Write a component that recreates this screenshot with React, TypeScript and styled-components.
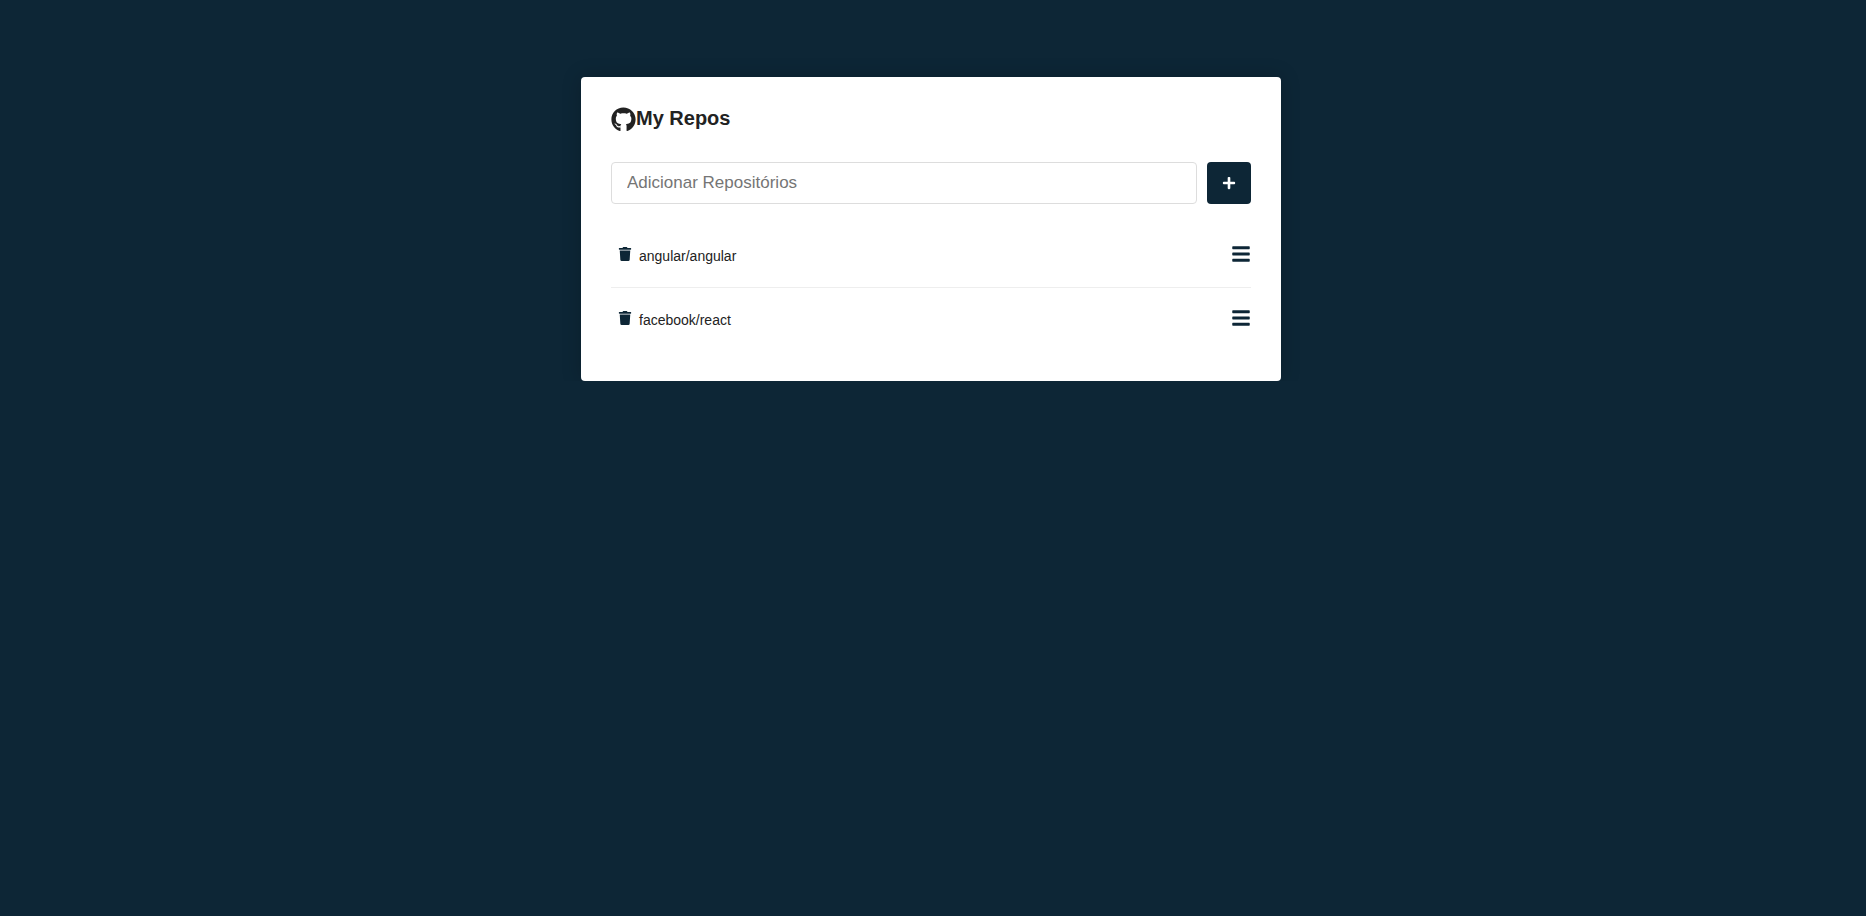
import React from 'react';
import styled, { createGlobalStyle } from 'styled-components';
import { FaGithub, FaPlus, FaBars, FaTrash } from 'react-icons/fa';

const GlobalStyle = createGlobalStyle`
  * { margin: 0; padding: 0; outline: 0; box-sizing: border-box; }
  body { background: #0d2636; font-size: 14px; padding-right: 4px; }
  body, input, button { color: #222; font-family: Arial, "Liberation Sans", Helvetica, sans-serif; }
  button { cursor: pointer; }
`;

const Container = styled.main`
  max-width: 700px;
  background: #fff;
  border-radius: 4px;
  box-shadow: 0 0 20px rgba(0, 0, 0, 0.2);
  padding: 30px;
  margin: 77px auto 0;
`;

const Title = styled.h1`
  font-size: 20px;
  display: flex;
  align-items: flex-start;
`;

const Form = styled.form`
  margin-top: 30px;
  display: flex;
`;

const RepoInput = styled.input`
  flex: 1;
  min-width: 0;
  height: 42px;
  border: 1px solid #ddd;
  padding: 10px 15px;
  border-radius: 4px;
  font-size: 17px;
`;

const SubmitButton = styled.button`
  background: #0d2636;
  border: 0;
  border-radius: 4px;
  margin-left: 10px;
  padding: 0 15px;
  display: flex;
  justify-content: center;
  align-items: center;
`;

const List = styled.ul`
  list-style: none;
  margin-top: 20px;
`;

const Item = styled.li`
  padding: 15px 0;
  display: flex;
  align-items: center;
  justify-content: space-between;

  & + & { border-top: 1px solid #eee; }
`;

const DeleteButton = styled.button`
  background: transparent;
  color: #0d2636;
  border: 0;
  padding: 8px 7px;
  border-radius: 4px;
`;

const RepoLink = styled.a`
  color: #0d2636;
  text-decoration: none;
`;

const repos = ['angular/angular', 'facebook/react'];

export default function App() {
  return (
    <>
      <GlobalStyle />
      <Container>
        <Title><FaGithub size={25} />My Repos</Title>
        <Form onSubmit={(e) => e.preventDefault()}>
          <RepoInput type="text" placeholder="Adicionar Repositórios" aria-label="Adicionar Repositórios" />
          <SubmitButton type="submit" aria-label="Adicionar"><FaPlus color="#fff" size={14} /></SubmitButton>
        </Form>
        <List>
          {repos.map((repo) => (
            <Item key={repo}>
              <span>
                <DeleteButton type="button" aria-label={`Remover ${repo}`}><FaTrash size={14} /></DeleteButton>
                {repo}
              </span>
              <RepoLink href={`#${repo}`} aria-label={`Detalhes de ${repo}`}><FaBars size={20} /></RepoLink>
            </Item>
          ))}
        </List>
      </Container>
    </>
  );
}
